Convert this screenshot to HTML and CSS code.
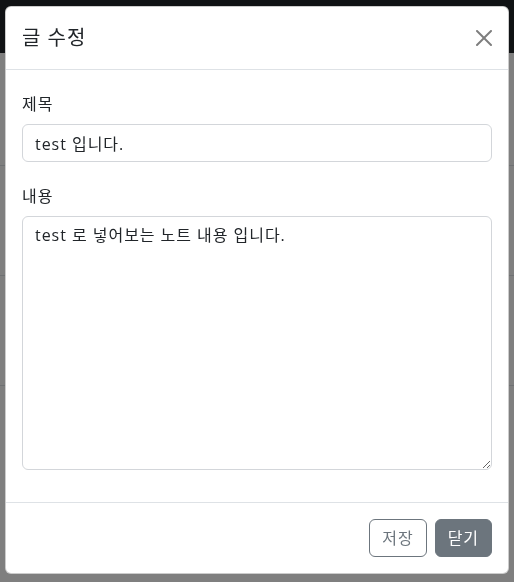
FILE: index.html
```html
<!DOCTYPE html>
<html lang="ko">
<head>
<meta charset="utf-8">
<title>글 수정</title>
<link rel="stylesheet" href="styles.css">
</head>
<body>
<div class="page">
  <div class="navbar"></div>
  <div class="list">
    <div class="list-item"></div>
    <div class="list-item"></div>
    <div class="list-item"></div>
  </div>
</div>
<div class="backdrop"></div>
<div class="modal">
  <div class="dialog">
    <div class="modal-header">
      <h5 class="modal-title">글 수정</h5>
      <button class="btn-close" type="button" aria-label="Close">
        <svg viewBox="0 0 16 16" width="16" height="16"><path d="M.293.293a1 1 0 0 1 1.414 0L8 6.586 14.293.293a1 1 0 1 1 1.414 1.414L9.414 8l6.293 6.293a1 1 0 0 1-1.414 1.414L8 9.414l-6.293 6.293a1 1 0 0 1-1.414-1.414L6.586 8 .293 1.707a1 1 0 0 1 0-1.414z"/></svg>
      </button>
    </div>
    <div class="modal-body">
      <div class="group">
        <label class="form-label" for="title">제목</label>
        <input class="form-control" id="title" type="text" value="test 입니다.">
      </div>
      <div class="group">
        <label class="form-label" for="content">내용</label>
        <textarea class="form-control area" id="content" rows="10">test 로 넣어보는 노트 내용 입니다.</textarea>
      </div>
    </div>
    <div class="modal-footer">
      <button class="btn btn-outline" type="button">저장</button>
      <button class="btn btn-secondary" type="button">닫기</button>
    </div>
  </div>
</div>
</body>
</html>
```

FILE: styles.css
```css
* { box-sizing: border-box; }
html, body { margin: 0; padding: 0; }
body {
  font-family: "Open Sans", "Noto Sans CJK KR", sans-serif;
  font-size: 16px;
  line-height: 1.5;
  letter-spacing: 0.06em;
  color: #212529;
  background: #fff;
  width: 514px;
  height: 582px;
  overflow: hidden;
}
.page { display: flex; flex-direction: column; }
.navbar { height: 53px; background: #212529; }
.list { display: flex; flex-direction: column; padding-top: 112px; }
.list-item { height: 110px; border-top: 1px solid #dee2e6; }

.backdrop {
  position: fixed;
  inset: 0;
  background: rgba(0, 0, 0, 0.5);
}
.modal {
  position: fixed;
  inset: 0;
  padding: 6px 5px;
  display: flex;
  justify-content: center;
  align-items: flex-start;
}
.dialog {
  width: 504px;
  background: #fff;
  border: 1px solid rgba(0, 0, 0, 0.2);
  border-radius: 6px;
  display: flex;
  flex-direction: column;
}
.modal-header {
  display: flex;
  align-items: center;
  justify-content: space-between;
  padding: 16px;
  border-bottom: 1px solid #dee2e6;
}
.modal-title {
  margin: 0;
  font-size: 20px;
  font-weight: 400;
  line-height: 30px;
}
.btn-close {
  border: 0;
  background: none;
  padding: 0;
  width: 16px;
  height: 16px;
  display: flex;
  opacity: 0.5;
  cursor: pointer;
}
.btn-close svg { fill: #000; display: block; }

.modal-body {
  padding: 22px 16px 32px;
  display: flex;
  flex-direction: column;
  gap: 22px;
}
.group { display: flex; flex-direction: column; }
.form-label {
  display: block;
  margin-bottom: 8px;
  line-height: 24px;
}
.form-control {
  display: block;
  width: 100%;
  height: 38px;
  padding: 6px 12px;
  font-family: inherit;
  font-size: 16px;
  line-height: 24px;
  letter-spacing: inherit;
  color: #212529;
  background: #fff;
  border: 1px solid #d3d6da;
  border-radius: 6px;
  margin: 0;
}
.area {
  height: 254px;
  resize: vertical;
}

.modal-footer {
  display: flex;
  justify-content: flex-end;
  align-items: center;
  padding: 12px;
  border-top: 1px solid #dee2e6;
}
.btn {
  margin: 4px;
  height: 38px;
  padding: 6px 12px;
  font-family: inherit;
  font-size: 16px;
  line-height: 24px;
  letter-spacing: inherit;
  border-radius: 6px;
  border: 1px solid #6c757d;
  cursor: pointer;
}
.btn-outline { background: #fff; color: #6c757d; }
.btn-secondary { background: #6c757d; color: #fff; }
```
